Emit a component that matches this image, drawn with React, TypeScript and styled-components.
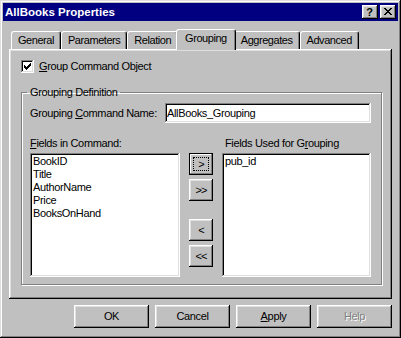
import styled, { createGlobalStyle, css } from 'styled-components';

const uiFont = css`
  font: 11px 'Liberation Sans', Arial, sans-serif;
  letter-spacing: -0.35px;
`;

const GlobalStyle = createGlobalStyle`
  html, body {
    margin: 0;
    padding: 0;
    background: #c0c0c0;
  }

  body {
    ${uiFont};
    line-height: 13px;
    color: #000;
  }
`;

const raised = css`
  box-shadow:
    inset -1px -1px #000,
    inset 1px 1px #fff,
    inset -2px -2px #808080,
    inset 2px 2px #dfdfdf;
`;

const sunken = css`
  box-shadow:
    inset -1px -1px #fff,
    inset 1px 1px #808080,
    inset -2px -2px #dfdfdf,
    inset 2px 2px #000;
`;

const Window = styled.div`
  box-sizing: border-box;
  width: 401px;
  height: 338px;
  padding: 3px;
  display: flex;
  flex-direction: column;
  background: #c0c0c0;
  box-shadow:
    inset -1px -1px #000,
    inset 1px 1px #dfdfdf,
    inset -2px -2px #808080,
    inset 2px 2px #fff;
`;

const TitleBar = styled.div`
  height: 18px;
  display: flex;
  align-items: center;
  justify-content: space-between;
  padding: 0 2px;
  background: #000080;
`;

const Title = styled.span`
  color: #fff;
  font-weight: bold;
  font-size: 11.5px;
  letter-spacing: 0;
`;

const TitleButtons = styled.div`
  display: flex;
  gap: 2px;
`;

const TitleButton = styled.button`
  box-sizing: border-box;
  width: 16px;
  height: 14px;
  padding: 0 1px 1px 0;
  border: 0;
  display: flex;
  align-items: center;
  justify-content: center;
  background: #c0c0c0;
  color: #000;
  font: bold 11px 'Liberation Sans', Arial, sans-serif;
  ${raised}
`;

const Body = styled.div`
  flex: 1;
  display: flex;
  flex-direction: column;
  padding: 8px 6px 0;
`;

const TabStrip = styled.div`
  display: flex;
  align-items: flex-end;
  height: 20px;
  padding-left: 2px;
`;

const Tab = styled.div<{ $active?: boolean }>`
  box-sizing: border-box;
  position: relative;
  z-index: ${p => (p.$active ? 1 : 0)};
  height: ${p => (p.$active ? 21 : 18)}px;
  margin: 0 ${p => (p.$active ? '-2px -1px' : '0 0')};
  padding: 2px ${p => (p.$active ? 8 : 6)}px 0;
  background: #c0c0c0;
  border-top: 1px solid #fff;
  border-left: 1px solid #fff;
  border-right: 1px solid #000;
  border-radius: 3px 3px 0 0;
  box-shadow: inset -1px 0 #808080;
  letter-spacing: -0.45px;
  white-space: nowrap;
`;

const TabPanel = styled.div`
  box-sizing: border-box;
  height: 250px;
  padding: 11px 10px 14px 12px;
  display: flex;
  flex-direction: column;
  ${raised}
`;

const CheckRow = styled.label`
  display: flex;
  align-items: center;
  gap: 5px;
  height: 13px;
`;

const CheckBox = styled.span`
  box-sizing: border-box;
  width: 13px;
  height: 13px;
  display: flex;
  align-items: center;
  justify-content: center;
  background: #fff;
  ${sunken}
`;

const GroupBox = styled.fieldset`
  flex: 1;
  margin: 13px 0 0;
  padding: 4px 10px 7px 8px;
  min-inline-size: 0;
  border: 1px solid #808080;
  box-shadow: inset 1px 1px #fff, 1px 1px #fff;
`;

const Legend = styled.legend`
  margin-left: -3px;
  padding: 0 2px 0 3px;
  line-height: 13px;
`;

const NameRow = styled.div`
  display: flex;
  align-items: center;
  justify-content: space-between;
  height: 20px;
`;

const TextInput = styled.input`
  box-sizing: border-box;
  width: 206px;
  height: 20px;
  padding: 0 1px 0 2px;
  border: 0;
  outline: none;
  background: #fff;
  color: #000;
  ${uiFont};
  ${sunken}
`;

const FieldsGrid = styled.div`
  display: grid;
  grid-template-columns: 150px 24px 149px;
  grid-template-rows: 13px 124px;
  column-gap: 9px;
  row-gap: 3px;
  margin-top: 14px;
`;

const FieldLabel = styled.div<{ $indent?: number }>`
  padding-left: ${p => p.$indent ?? 0}px;
  white-space: nowrap;
`;

const ListBox = styled.div`
  box-sizing: border-box;
  padding: 2px;
  overflow: hidden;
  background: #fff;
  ${sunken}
`;

const ListItem = styled.div`
  height: 13px;
  padding-left: 1px;
  white-space: nowrap;
`;

const MoveColumn = styled.div`
  display: flex;
  flex-direction: column;
  gap: 4px;
`;

const MoveButton = styled.button<{ $focused?: boolean; $spaced?: boolean }>`
  box-sizing: border-box;
  width: 24px;
  height: 22px;
  margin-top: ${p => (p.$spaced ? 14 : 0)}px;
  padding: 0;
  border: 0;
  display: flex;
  align-items: center;
  justify-content: center;
  background: #c0c0c0;
  color: #000;
  font: 11px 'Liberation Sans', Arial, sans-serif;
  letter-spacing: -1px;
  ${p =>
    p.$focused
      ? css`
          box-shadow:
            inset 0 0 0 1px #000,
            inset -2px -2px #808080,
            inset 2px 2px #fff;
        `
      : raised}
`;

const FocusRing = styled.span`
  box-sizing: border-box;
  width: 16px;
  height: 14px;
  display: flex;
  align-items: center;
  justify-content: center;
  border: 1px dotted #000;
`;

const ButtonRow = styled.div`
  display: flex;
  justify-content: flex-end;
  gap: 6px;
  margin-top: 6px;
`;

const PushButton = styled.button`
  box-sizing: border-box;
  width: 75px;
  height: 23px;
  padding: 0 0 1px;
  border: 0;
  background: #c0c0c0;
  color: #000;
  ${uiFont};
  ${raised}

  &:disabled {
    color: #808080;
    text-shadow: 1px 1px #fff;
  }
`;

const checkPixels = [
  [6, 0, 1], [5, 1, 2], [0, 2, 1], [4, 2, 3], [0, 3, 2],
  [3, 3, 3], [0, 4, 5], [1, 5, 3], [2, 6, 1],
];

const closePixels = [
  [0, 0, 2], [6, 0, 2], [1, 1, 2], [5, 1, 2], [2, 2, 4],
  [3, 3, 2], [2, 4, 4], [1, 5, 2], [5, 5, 2], [0, 6, 2], [6, 6, 2],
];

function PixelIcon({ pixels, width }: { pixels: number[][]; width: number }) {
  return (
    <svg width={width} height={7} viewBox={`0 0 ${width} 7`} shapeRendering="crispEdges">
      {pixels.map(([x, y, w]) => (
        <rect key={`${x}-${y}`} x={x} y={y} width={w} height={1} fill="#000" />
      ))}
    </svg>
  );
}

const tabs = ['General', 'Parameters', 'Relation', 'Grouping', 'Aggregates', 'Advanced'];
const commandFields = ['BookID', 'Title', 'AuthorName', 'Price', 'BooksOnHand'];
const groupFields = ['pub_id'];

function App() {
  return (
    <>
      <GlobalStyle />
      <Window>
        <TitleBar>
          <Title>AllBooks Properties</Title>
          <TitleButtons>
            <TitleButton>?</TitleButton>
            <TitleButton>
              <PixelIcon pixels={closePixels} width={8} />
            </TitleButton>
          </TitleButtons>
        </TitleBar>

        <Body>
          <TabStrip>
            {tabs.map(tab => (
              <Tab key={tab} $active={tab === 'Grouping'}>
                {tab}
              </Tab>
            ))}
          </TabStrip>

          <TabPanel>
            <CheckRow>
              <CheckBox>
                <PixelIcon pixels={checkPixels} width={7} />
              </CheckBox>
              <span>
                <u>G</u>roup Command Object
              </span>
            </CheckRow>

            <GroupBox>
              <Legend>Grouping Definition</Legend>
              <NameRow>
                <span>
                  Grouping <u>C</u>ommand Name:
                </span>
                <TextInput readOnly value="AllBooks_Grouping" />
              </NameRow>

              <FieldsGrid>
                <FieldLabel>
                  <u>F</u>ields in Command:
                </FieldLabel>
                <div />
                <FieldLabel $indent={3}>
                  Fields Used for G<u>r</u>ouping
                </FieldLabel>

                <ListBox>
                  {commandFields.map(f => (
                    <ListItem key={f}>{f}</ListItem>
                  ))}
                </ListBox>

                <MoveColumn>
                  <MoveButton $focused>
                    <FocusRing>&gt;</FocusRing>
                  </MoveButton>
                  <MoveButton>&gt;&gt;</MoveButton>
                  <MoveButton $spaced>&lt;</MoveButton>
                  <MoveButton>&lt;&lt;</MoveButton>
                </MoveColumn>

                <ListBox>
                  {groupFields.map(f => (
                    <ListItem key={f}>{f}</ListItem>
                  ))}
                </ListBox>
              </FieldsGrid>
            </GroupBox>
          </TabPanel>

          <ButtonRow>
            <PushButton>OK</PushButton>
            <PushButton>Cancel</PushButton>
            <PushButton>
              <u>A</u>pply
            </PushButton>
            <PushButton disabled>Help</PushButton>
          </ButtonRow>
        </Body>
      </Window>
    </>
  );
}

export default App;
